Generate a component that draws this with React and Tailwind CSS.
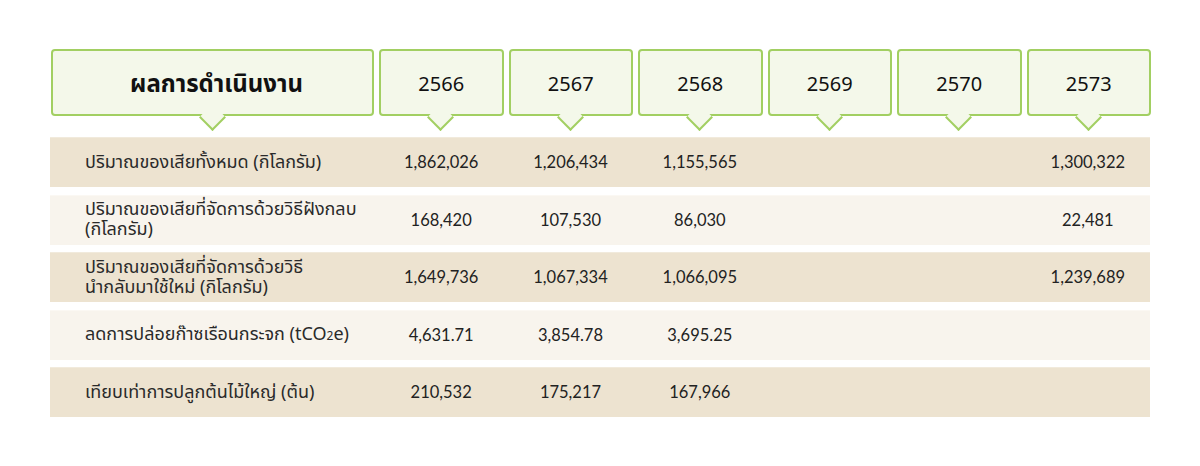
import React from "react";

const years = ["2566", "2567", "2568", "2569", "2570", "2573"];

const rows = [
  {
    label: ["ปริมาณของเสียทั้งหมด (กิโลกรัม)"],
    values: ["1,862,026", "1,206,434", "1,155,565", "", "", "1,300,322"],
    dark: true,
  },
  {
    label: ["ปริมาณของเสียที่จัดการด้วยวิธีฝังกลบ", "(กิโลกรัม)"],
    values: ["168,420", "107,530", "86,030", "", "", "22,481"],
    dark: false,
  },
  {
    label: ["ปริมาณของเสียที่จัดการด้วยวิธี", "นำกลับมาใช้ใหม่ (กิโลกรัม)"],
    values: ["1,649,736", "1,067,334", "1,066,095", "", "", "1,239,689"],
    dark: true,
  },
  {
    label: "co2",
    values: ["4,631.71", "3,854.78", "3,695.25", "", "", ""],
    dark: false,
  },
  {
    label: ["เทียบเท่าการปลูกต้นไม้ใหญ่ (ต้น)"],
    values: ["210,532", "175,217", "167,966", "", "", ""],
    dark: true,
  },
];

const thai = { fontFamily: '"Noto Sans Thai", "Noto Sans", "Open Sans", sans-serif' };
const lato = { fontFamily: 'Lato, "Noto Sans", sans-serif' };

function HeaderBox({ children, bold }) {
  return (
    <div className="relative h-[67px] rounded-[4px] border-2 border-[#a2cf62] bg-[#f4f8ea] flex items-center justify-center">
      <span
        className={`${bold ? "text-[24px] font-bold pl-[8px]" : "text-[20px]"} text-[#111] leading-none pt-[4px]`}
        style={thai}
      >
        {children}
      </span>
      <div className="absolute left-1/2 bottom-[-13px] -ml-[10px] w-[19px] h-[19px] rotate-45 bg-[#f4f8ea] border-r-2 border-b-2 border-[#a2cf62]" />
    </div>
  );
}

export default function App() {
  return (
    <div className="w-[1200px] h-[466px] bg-white pt-[49px] pl-[50px]">
      <div className="w-[1101px]">
        <div className="grid grid-cols-[323px_repeat(6,minmax(0,1fr))] gap-x-[5px] pl-[1px]">
          <HeaderBox bold>ผลการดำเนินงาน</HeaderBox>
          {years.map((y) => (
            <HeaderBox key={y}>{y}</HeaderBox>
          ))}
        </div>
        <div className="mt-[21px] flex flex-col gap-[7.5px] w-[1100px]">
          {rows.map((r, i) => (
            <div
              key={i}
              className={`h-[50px] grid grid-cols-[324px_repeat(6,minmax(0,1fr))] gap-x-[5px] items-center border-t ${
                r.dark ? "bg-[#ede3d0] border-[#f1eadc]" : "bg-[#f8f4ed] border-[#fbf8f3]"
              }`}
            >
              <div className="pl-[35px] text-[18px] leading-[20px] text-[#2a2a2a] whitespace-nowrap" style={thai}>
                {r.label === "co2" ? (
                  <span>
                    ลดการปล่อยก๊าซเรือนกระจก (tCO<span className="text-[12px]">2</span>e)
                  </span>
                ) : (
                  r.label.map((l, k) => <div key={k}>{l}</div>)
                )}
              </div>
              {r.values.map((v, k) => (
                <div key={k} className="text-center text-[16.5px] text-[#222]" style={lato}>
                  {v}
                </div>
              ))}
            </div>
          ))}
        </div>
      </div>
    </div>
  );
}
